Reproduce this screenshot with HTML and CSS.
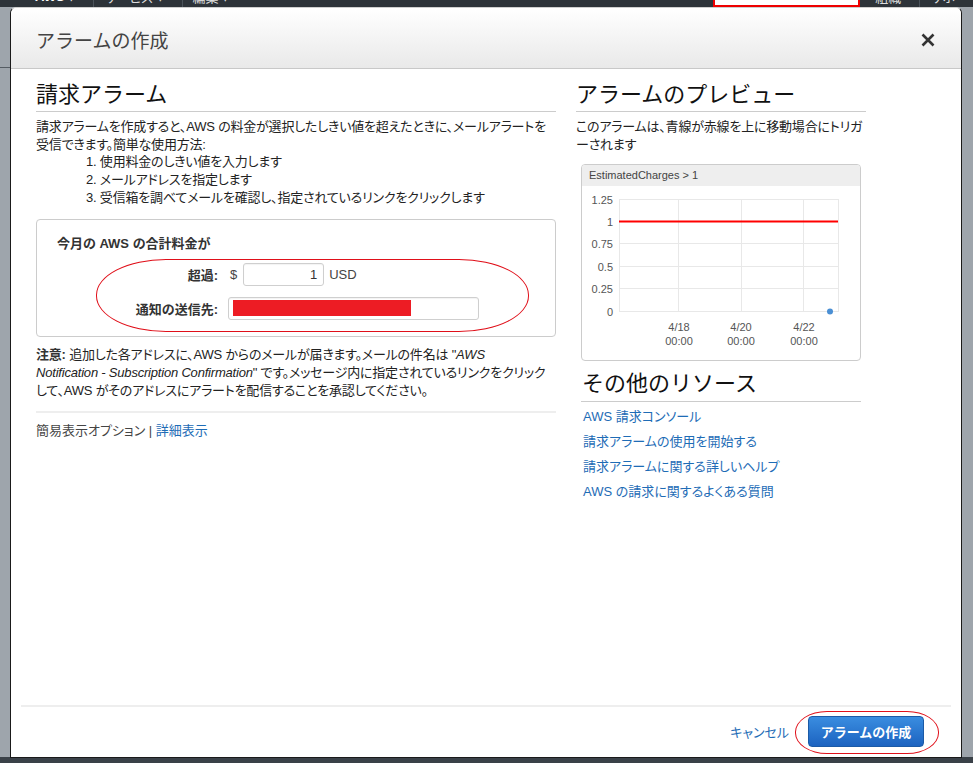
FILE: index.html
```html
<!DOCTYPE html>
<html lang="ja">
<head>
<meta charset="utf-8">
<title>アラームの作成</title>
<link rel="stylesheet" href="styles.css">
</head>
<body>
<div class="page">
  <header class="topnav">
    <div class="topnav-row">
      <span class="nav-item nav-brand">AWS ▾</span>
      <span class="nav-sep"></span>
      <span class="nav-item">サービス ▾</span>
      <span class="nav-sep"></span>
      <span class="nav-item">編集 ▾</span>
      <span class="nav-spacer"></span>
      <span class="nav-redbox"></span>
      <span class="nav-item">組織</span>
      <span class="nav-sep"></span>
      <span class="nav-item">サポ</span>
    </div>
  </header>
  <main class="backdrop">
    <div class="back-line"></div>
  </main>
  <footer class="bottombar"></footer>

  <div class="modal">
    <div class="modal-header">
      <h1 class="modal-title">アラームの作成</h1>
      <button class="close-btn" aria-label="閉じる">
        <svg width="14" height="14" viewBox="0 0 14 14"><path d="M1.5 1.5 L12.5 12.5 M12.5 1.5 L1.5 12.5" stroke="#333" stroke-width="2.6" stroke-linecap="butt"/></svg>
      </button>
    </div>

    <div class="modal-body">
      <section class="col-left">
        <h2 class="section-title">請求アラーム</h2>
        <p class="text">請求アラームを作成すると、AWS の料金が選択したしきい値を超えたときに、メールアラートを<br>受信できます。簡単な使用方法:</p>
        <ol class="steps">
          <li>使用料金のしきい値を入力します</li>
          <li>メールアドレスを指定します</li>
          <li>受信箱を調べてメールを確認し、指定されているリンクをクリックします</li>
        </ol>

        <div class="form-box">
          <div class="form-title">今月の AWS の合計料金が</div>
          <div class="form-row">
            <label class="form-label">超過:</label>
            <span class="unit">$</span>
            <div class="input input-amount">1</div>
            <span class="unit">USD</span>
          </div>
          <div class="form-row row-email">
            <label class="form-label">通知の送信先:</label>
            <div class="input input-email"><span class="redact"></span></div>
          </div>
          <div class="mark mark-form"></div>
        </div>

        <p class="text note"><b>注意:</b> 追加した各アドレスに、AWS からのメールが届きます。メールの件名は "<i>AWS<br>Notification - Subscription Confirmation</i>" です。メッセージ内に指定されているリンクをクリック<br>して、AWS がそのアドレスにアラートを配信することを承認してください。</p>

        <div class="options">簡易表示オプション | <a class="link" href="#">詳細表示</a></div>
      </section>

      <aside class="col-right">
        <h2 class="section-title">アラームのプレビュー</h2>
        <p class="text">このアラームは、青線が赤線を上に移動場合にトリガ<br>ーされます</p>

        <div class="chart">
          <div class="chart-head">EstimatedCharges &gt; 1</div>
          <svg class="chart-svg" width="278" height="174" viewBox="0 0 278 174">
            <g stroke="#e8e8e8" stroke-width="1">
              <line x1="37" y1="13.5" x2="256" y2="13.5"/>
              <line x1="37" y1="35.5" x2="256" y2="35.5"/>
              <line x1="37" y1="57.5" x2="256" y2="57.5"/>
              <line x1="37" y1="80.5" x2="256" y2="80.5"/>
              <line x1="37" y1="102.5" x2="256" y2="102.5"/>
              <line x1="37" y1="125.5" x2="256" y2="125.5"/>
              <line x1="37.5" y1="13" x2="37.5" y2="126"/>
              <line x1="96.5" y1="13" x2="96.5" y2="126"/>
              <line x1="159.5" y1="13" x2="159.5" y2="126"/>
              <line x1="221.5" y1="13" x2="221.5" y2="126"/>
              <line x1="256.5" y1="13" x2="256.5" y2="126"/>
            </g>
            <line x1="37" y1="35.5" x2="256" y2="35.5" stroke="#ff0000" stroke-width="2"/>
            <circle cx="248" cy="125.5" r="3" fill="#4a8fd4"/>
            <g class="axis" text-anchor="end">
              <text x="31" y="18">1.25</text>
              <text x="31" y="40">1</text>
              <text x="31" y="62">0.75</text>
              <text x="31" y="85">0.5</text>
              <text x="31" y="107">0.25</text>
              <text x="31" y="130">0</text>
            </g>
            <g class="axis" text-anchor="middle">
              <text x="97" y="145">4/18</text>
              <text x="97" y="159">00:00</text>
              <text x="159" y="145">4/20</text>
              <text x="159" y="159">00:00</text>
              <text x="222" y="145">4/22</text>
              <text x="222" y="159">00:00</text>
            </g>
          </svg>
        </div>

        <div class="resources">
          <h2 class="section-title">その他のリソース</h2>
          <ul class="res-links">
            <li><a class="link" href="#">AWS 請求コンソール</a></li>
            <li><a class="link" href="#">請求アラームの使用を開始する</a></li>
            <li><a class="link" href="#">請求アラームに関する詳しいヘルプ</a></li>
            <li><a class="link" href="#">AWS の請求に関するよくある質問</a></li>
          </ul>
        </div>
      </aside>
    </div>

    <div class="modal-footer">
      <a class="link cancel" href="#">キャンセル</a>
      <button class="primary-btn">アラームの作成</button>
      <div class="mark mark-btn"></div>
    </div>
  </div>
</div>
</body>
</html>
```

FILE: styles.css
```css
* { box-sizing: border-box; }

html, body {
  margin: 0;
  padding: 0;
}

body {
  font-family: "Liberation Sans", "Noto Sans CJK JP", sans-serif;
  font-size: 13px;
  color: #333;
  font-feature-settings: "palt";
}

.page {
  position: relative;
  width: 973px;
  height: 763px;
  display: flex;
  flex-direction: column;
  overflow: hidden;
  background: #9ea5ac;
}

/* top navigation, mostly covered */
.topnav {
  height: 7px;
  background: #2d3339;
  overflow: hidden;
  flex: none;
}
.topnav-row {
  display: flex;
  align-items: center;
  height: 24px;
  margin-top: -16px;
  padding-left: 25px;
  color: #ddd;
  font-size: 13px;
}
.nav-item { padding: 0 18px 0 10px; }
.nav-brand { font-weight: bold; color: #fff; }
.nav-sep { width: 1px; height: 24px; background: #4a525a; }
.nav-spacer { flex: 1; }
.nav-redbox {
  width: 147px;
  height: 21px;
  margin-right: 5px;
  background: #fff;
  border: 2px solid #e00;
}

.backdrop {
  flex: 1;
  background: #9ea5ac;
  padding-top: 60px;
}
.back-line {
  width: 10px;
  height: 1px;
  background: #555c63;
}

.bottombar {
  height: 6px;
  background: #3a4148;
  flex: none;
}

/* modal */
.modal {
  position: absolute;
  left: 10px;
  top: 7px;
  width: 952px;
  height: 751px;
  background: #fff;
  border: 1px solid #1a1a1a;
  border-top-color: #cfcfcf;
  border-radius: 6px 6px 0 0;
  display: flex;
  flex-direction: column;
}

.modal-header {
  flex: none;
  height: 61px;
  display: flex;
  align-items: center;
  justify-content: space-between;
  padding: 0 26px 0 25px;
  background: linear-gradient(#ffffff, #e9e9e9);
  border-bottom: 1px solid #c8c8c8;
  border-radius: 6px 6px 0 0;
}
.modal-title {
  margin: 0;
  font-size: 19px;
  font-weight: normal;
  color: #444;
  font-family: "Noto Sans CJK JP", sans-serif;
  font-feature-settings: normal;
  padding-top: 2px;
}
.close-btn {
  border: 0;
  background: none;
  padding: 0;
  width: 14px;
  height: 14px;
  display: flex;
  margin-top: 4px;
}

.modal-body {
  flex: 1;
  display: flex;
  gap: 20px;
  padding: 8px 25px 0;
}

.col-left { width: 520px; flex: none; }
.col-right { width: 290px; flex: none; }

.section-title {
  margin: 0;
  font-size: 22px;
  line-height: 30px;
  font-weight: normal;
  color: #111;
  padding-bottom: 4px;
  border-bottom: 1px solid #cccccc;
  font-family: "Noto Sans CJK JP", sans-serif;
  font-feature-settings: normal;
}

.text {
  margin: 6px 0 0;
  line-height: 17.5px;
  color: #222;
  letter-spacing: -0.2px;
  white-space: nowrap;
}

.steps {
  margin: 0;
  padding-left: 50px;
  list-style-position: inside;
  line-height: 18px;
  color: #222;
  letter-spacing: -0.2px;
}

.form-box {
  position: relative;
  margin-top: 12px;
  border: 1px solid #cccccc;
  border-radius: 4px;
  padding: 15px 20px 16px;
}
.form-title {
  font-weight: bold;
  line-height: 18px;
  color: #333;
}
.form-row {
  display: flex;
  align-items: center;
  height: 23px;
  margin-top: 10px;
}
.row-email { margin-top: 11px; }
.form-label {
  width: 161px;
  text-align: right;
  font-weight: bold;
  color: #333;
  margin-right: 12px;
}
.unit { color: #444; }
.input {
  height: 23px;
  border: 1px solid #cfcfcf;
  border-radius: 3px;
  background: #fff;
  box-shadow: inset 0 1px 1px rgba(0,0,0,0.05);
}
.input-amount {
  width: 81px;
  margin: 0 5px 0 6px;
  text-align: right;
  padding-right: 6px;
  line-height: 21px;
  color: #333;
}
.row-email .form-label { margin-right: 10px; }
.input-email {
  width: 251px;
  padding: 2px 0 0 4px;
}
.redact {
  display: block;
  width: 178px;
  height: 16px;
  background: #ed1c24;
}

.mark {
  position: absolute;
  border: 1px solid #e0101a;
  pointer-events: none;
}
.mark-form {
  left: 59px;
  top: 39px;
  width: 433px;
  height: 73px;
  border-radius: 70px / 36px;
}

.note {
  margin-top: 9px;
  line-height: 18px;
}
.note b { color: #333; }
.note i { font-style: italic; }

.options {
  margin-top: 11px;
  border-top: 2px solid #eeeeee;
  padding-top: 9px;
  line-height: 18px;
  color: #444;
}

.link {
  color: #1e6cb6;
  text-decoration: none;
}

/* chart */
.chart {
  margin: 11px 0 0 5px;
  width: 280px;
  height: 197px;
  border: 1px solid #cccccc;
  border-radius: 4px;
  overflow: hidden;
}
.chart-head {
  height: 21px;
  background: #eeeeee;
  font-size: 11px;
  line-height: 21px;
  padding-left: 7px;
  color: #444;
}
.chart-svg { display: block; }
.axis text {
  font-family: "Liberation Sans", sans-serif;
  font-size: 11px;
  fill: #555;
}

.resources {
  margin: 5px 0 0 5px;
  width: 280px;
}
.resources .section-title { padding-left: 1px; padding-bottom: 5px; }
.res-links {
  list-style: none;
  margin: 0;
  padding: 2px 0 0 2px;
}
.res-links li { line-height: 25px; }

/* footer */
.modal-footer {
  position: relative;
  flex: none;
  margin: 0 10px;
  height: 52px;
  border-top: 2px solid #eeeeee;
  display: flex;
  align-items: center;
  justify-content: flex-end;
  padding-right: 27px;
  padding-bottom: 1px;
}
.cancel { margin-right: 19px; }
.primary-btn {
  width: 116px;
  height: 31px;
  border: 1px solid #1b5aa6;
  border-radius: 4px;
  background: linear-gradient(#3a8de0, #1c63c0);
  color: #fff;
  font-weight: bold;
  font-size: 13px;
  font-family: "Noto Sans CJK JP", sans-serif;
  padding: 0;
}
.mark-btn {
  right: 12px;
  top: 4px;
  width: 144px;
  height: 43px;
  border-radius: 32px / 21px;
}
```
